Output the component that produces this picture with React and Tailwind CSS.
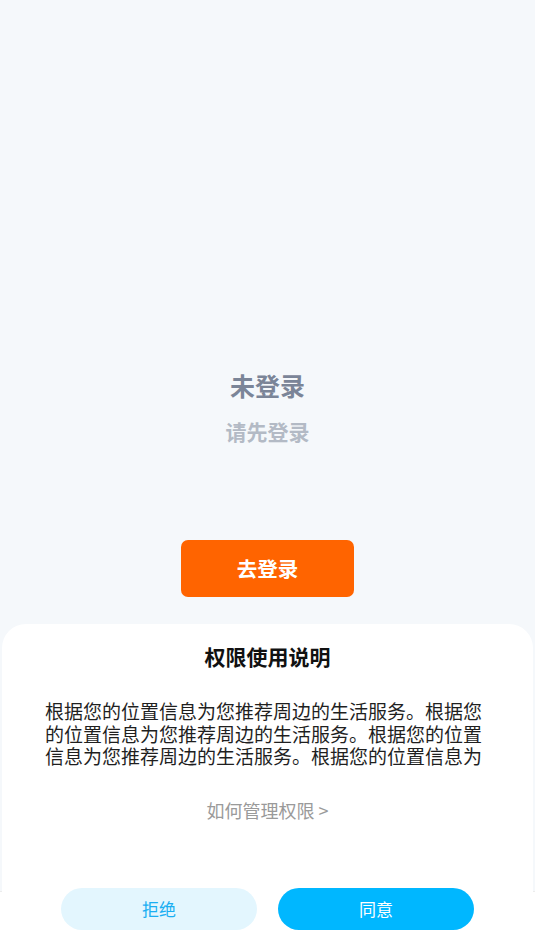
// App.jsx — not-logged-in page with permission sheet

const BODY =
  "根据您的位置信息为您推荐周边的生活服务。根据您的位置信息为您推荐周边的生活服务。根据您的位置信息为您推荐周边的生活服务。根据您的位置信息为";

const PermissionSheet = () => {
  return (
    <div className="absolute bottom-0 left-[2px] right-[2px] flex h-[327px] flex-col items-center rounded-t-[24px] bg-white">
      <h2 className="mt-[18px] text-[21px] font-bold leading-[28px] text-[#111111]">
        权限使用说明
      </h2>

      <p className="mt-[30px] ml-[43px] h-[67.5px] w-[444px] self-start text-[19px] leading-[22.5px] text-[#1f1f1f]">
        {BODY}
      </p>

      <button className="mt-[30px] text-[18px] leading-[24px] text-[#9a9a9a]">
        如何管理权限 &gt;
      </button>

      <div className="mt-[66px] flex gap-[21px]">
        <button className="flex h-[42px] w-[196px] items-center justify-center rounded-full bg-[#e3f6fe] text-[17px] text-[#1aaef2]">
          拒绝
        </button>
        <button className="flex h-[42px] w-[196px] items-center justify-center rounded-full bg-[#00b7ff] text-[17px] text-white">
          同意
        </button>
      </div>
    </div>
  );
};

export default function App() {
  return (
    <div className="relative flex h-[951px] w-[535px] flex-col overflow-hidden bg-[#f5f8fb] font-['Noto_Sans_CJK_SC','Noto_Sans',sans-serif]">
      <main className="flex flex-1 flex-col items-center pt-[370px]">
        <h1 className="text-[25px] font-bold leading-[30px] text-[#7b8598]">未登录</h1>
        <p className="mt-[18px] text-[21px] font-bold leading-[26px] text-[#b3bac5]">请先登录</p>
        <button className="mt-[96px] flex h-[57px] w-[173px] items-center justify-center rounded-[7px] bg-[#ff6400] text-[20.5px] font-bold text-white">
          去登录
        </button>
      </main>

      <footer className="h-[60px] border-t border-[#ececec] bg-white" />

      <PermissionSheet />
    </div>
  );
}
